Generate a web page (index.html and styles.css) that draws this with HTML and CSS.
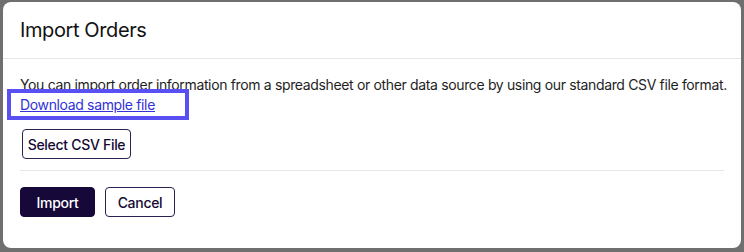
FILE: index.html
```
<!DOCTYPE html>
<html>
<head>
<meta charset="utf-8">
<link rel="stylesheet" href="styles.css">
</head>
<body>
<div class="modal">
  <div class="modal-header">
    <h1 class="modal-title">Import Orders</h1>
  </div>
  <div class="modal-body">
    <p class="intro">You can import order information from a spreadsheet or other data source by using our standard CSV file format.</p>
    <a class="sample-link" href="#">Download sample file</a>
    <div class="file-row">
      <button class="btn btn-outline btn-select">Select CSV File</button>
    </div>
    <div class="actions">
      <button class="btn btn-primary">Import</button>
      <button class="btn btn-outline btn-cancel">Cancel</button>
    </div>
  </div>
</div>
</body>
</html>
```
FILE: styles.css
```
html, body {
  margin: 0;
  padding: 0;
}
body {
  background: #6f6f6f;
  padding: 2px 3px 4px 3px;
  font-family: Inter, "Noto Sans", sans-serif;
  color: #1b1b1b;
}
.modal {
  background: #ffffff;
  border-radius: 8px;
  height: 246px;
  box-sizing: border-box;
  overflow: hidden;
}
.modal-header {
  height: 57px;
  box-sizing: border-box;
  border-bottom: 1px solid #e6e6e6;
  padding: 0 17px;
  display: flex;
  align-items: center;
}
.modal-title {
  margin: 0;
  font-size: 20px;
  font-weight: 400;
  letter-spacing: -0.4px;
  color: #111111;
}
.modal-body {
  padding: 16px 17px 0 17px;
}
.intro {
  margin: 0;
  font-size: 14px;
  line-height: 19px;
  letter-spacing: -0.35px;
  color: #1e1e1e;
  white-space: nowrap;
}
.sample-link {
  display: inline-block;
  font-size: 14px;
  line-height: 19px;
  letter-spacing: -0.35px;
  color: #3232d6;
  text-decoration: underline;
  outline: 4px solid #5a4ff3;
  padding: 2px 30px 2px 9px;
  margin: -2px 0 -2px -9px;
}
.file-row {
  padding: 15px 2px 11px 2px;
  border-bottom: 1px solid #e6e6e6;
}
.btn {
  font-family: Inter, "Noto Sans", sans-serif;
  font-size: 14px;
  font-weight: 500;
  letter-spacing: -0.3px;
  height: 30px;
  border-radius: 4px;
  box-sizing: border-box;
  cursor: pointer;
  padding: 0;
}
.btn-outline {
  background: #ffffff;
  border: 1px solid #2a2150;
  color: #140a33;
}
.btn-select {
  width: 109px;
}
.btn-primary {
  background: #160838;
  border: 1px solid #160838;
  color: #ffffff;
  width: 75px;
}
.btn-cancel {
  width: 70px;
}
.actions {
  display: flex;
  gap: 10px;
  padding-top: 16px;
}
```
